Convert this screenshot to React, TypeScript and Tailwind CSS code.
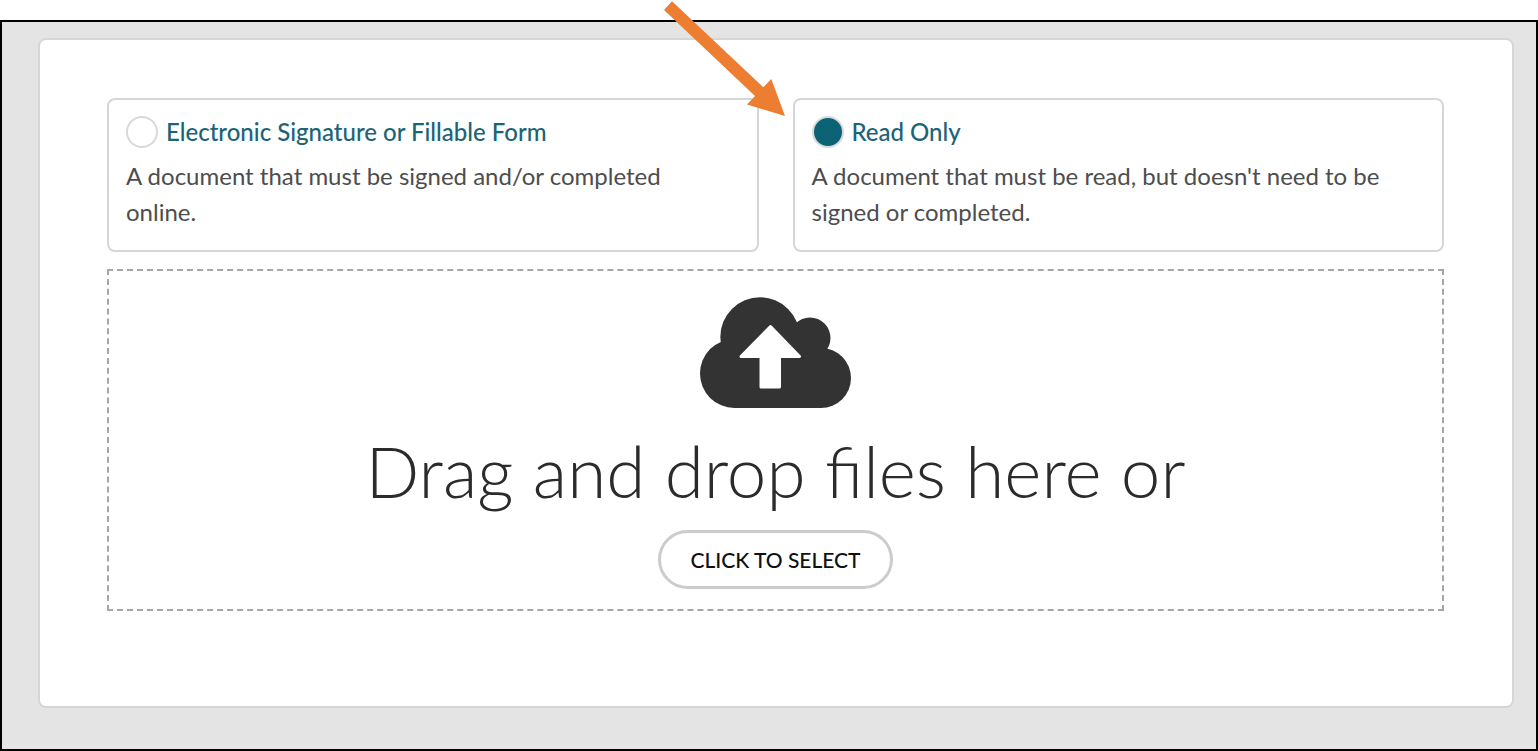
import { useState } from "react";

const documentTypes = [
  {
    id: "fillable",
    title: "Electronic Signature or Fillable Form",
    description: "A document that must be signed and/or completed online.",
  },
  {
    id: "read-only",
    title: "Read Only",
    description:
      "A document that must be read, but doesn't need to be signed or completed.",
  },
];

function PointerArrow() {
  return (
    <svg
      aria-hidden="true"
      viewBox="0 0 122 116"
      className="pointer-events-none absolute right-full bottom-[136px] mr-2 h-[116px] w-[122px]"
    >
      <path
        d="M9 1.3 L100.3 87.3 L108.3 79 L122 116 L84 104.5 L92 96 L1 10 Z"
        fill="#ed7d31"
      />
    </svg>
  );
}

function CloudUploadIcon() {
  return (
    <svg
      aria-hidden="true"
      viewBox="0 0 151 111"
      className="h-[111px] w-[151px] text-[#333333]"
      fill="currentColor"
    >
      <circle cx="60" cy="40" r="39.7" />
      <circle cx="34.5" cy="76.5" r="34.5" />
      <circle cx="121" cy="81" r="30" />
      <circle cx="110" cy="41" r="20.5" />
      <path d="M34.5 42 H121 V111 H34.5 Z" />
      <path
        d="M70.5 29.5 L99.5 59.5 H79.5 V90 H61 V59.5 H41 Z"
        fill="#fff"
        stroke="#fff"
        strokeWidth="3"
        strokeLinejoin="round"
      />
    </svg>
  );
}

export default function App() {
  const [selected, setSelected] = useState("read-only");

  return (
    <div className="flex min-h-screen flex-col bg-white pt-5 font-['Lato',sans-serif]">
      <main className="flex-1 border-2 border-black bg-[#e4e4e4] pt-4 pr-[22px] pb-10 pl-9">
        <form className="rounded-lg border-2 border-[#d6d6d6] bg-white pt-[58px] pr-[68px] pb-[95px] pl-[67px]">
          <fieldset
            aria-label="Document type"
            className="grid grid-cols-2 gap-[34px]"
          >
            {documentTypes.map((type) => (
              <div key={type.id} className="relative">
                {type.id === "read-only" && <PointerArrow />}
                <div className="h-full rounded-lg border-2 border-[#d6d6d6] px-[17px] pt-4 pb-5">
                  <div className="flex h-8 items-center gap-2">
                    <input
                      type="radio"
                      id={type.id}
                      name="document-type"
                      checked={selected === type.id}
                      onChange={() => setSelected(type.id)}
                      aria-describedby={`${type.id}-description`}
                      className="size-8 shrink-0 appearance-none rounded-full border-2 border-[#d9d9d9] bg-white checked:bg-[#0b6375]"
                    />
                    <label
                      htmlFor={type.id}
                      className="text-2xl font-medium text-[#1b6478]"
                    >
                      {type.title}
                    </label>
                  </div>
                  <p
                    id={`${type.id}-description`}
                    className="mt-2.5 pr-4 text-2xl leading-9 text-[#4d4d4d]"
                  >
                    {type.description}
                  </p>
                </div>
              </div>
            ))}
          </fieldset>

          <div className="mt-[17px] flex flex-col items-center border-2 border-dashed border-[#a6a6a6] pt-[26px] pb-5">
            <CloudUploadIcon />
            <h2 className="mt-3.5 mb-2.5 text-[71px] leading-[98px] font-light text-[#2b2b2b]">
              Drag and drop files here or
            </h2>
            <button
              type="button"
              className="h-[59px] rounded-full border-[3px] border-[#cccccc] bg-white px-[29px] text-[21px] font-medium text-[#111111]"
            >
              CLICK TO SELECT
            </button>
          </div>
        </form>
      </main>
    </div>
  );
}
